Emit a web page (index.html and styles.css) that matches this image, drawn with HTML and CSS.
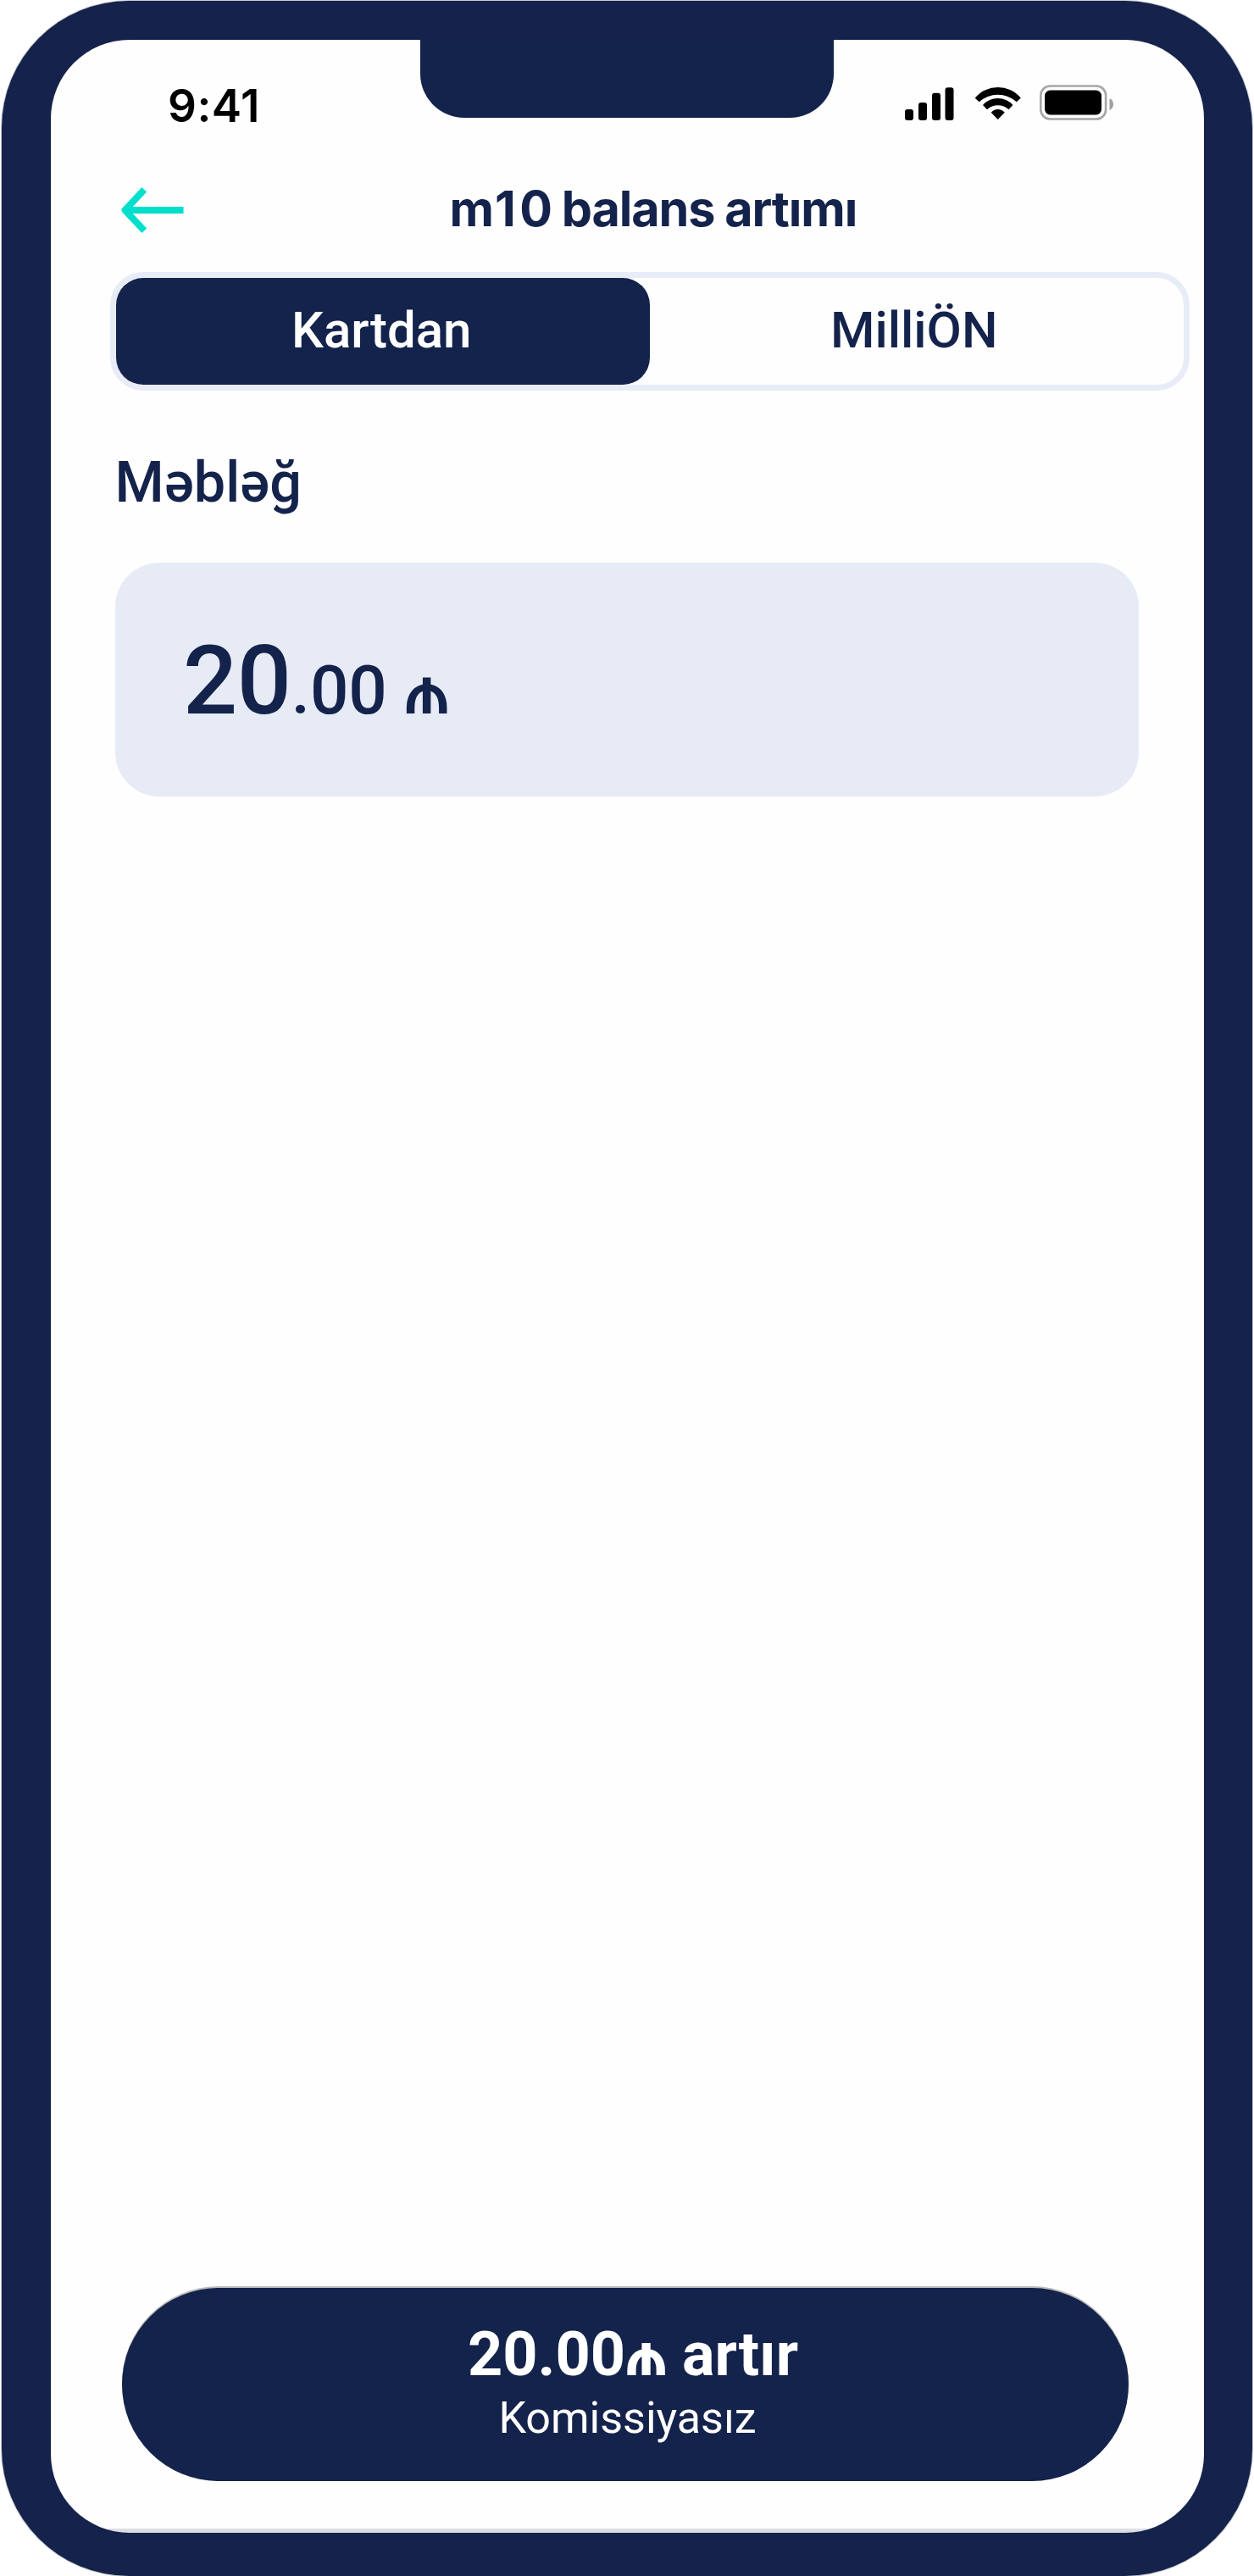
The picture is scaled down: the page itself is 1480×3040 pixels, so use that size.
FILE: index.html
```html
<!DOCTYPE html>
<html lang="az">
<head>
<meta charset="utf-8">
<title>m10 balans artımı</title>
<link rel="stylesheet" href="styles.css">
</head>
<body>
<div class="phone">
  <main class="screen">
    <div class="notch"></div>
    <div class="status-bar">
      <span class="time">9:41</span>
      <svg class="status-icons" viewBox="0 0 250 46" aria-hidden="true">
        <rect x="3" y="31" width="10" height="13" rx="3"/>
        <rect x="19" y="23" width="10" height="21" rx="3"/>
        <rect x="35" y="11.800" width="10" height="32.200" rx="3"/>
        <rect x="50.500" y="5.200" width="10" height="38.800" rx="3"/>
        <path d="M85.700 17.700A35 35 0 0 1 139.800 17.700L134.700 22.300A32.400 32.400 0 0 0 90.700 22.300ZM95 26A23.600 23.600 0 0 1 130.400 26L125.400 31.300A18.600 18.600 0 0 0 100 31.300ZM104.700 34.700A10.500 10.500 0 0 1 120.800 34.700L112.700 43Z"/>
        <rect x="163.300" y="3.500" width="76.800" height="39" rx="11" fill="none" stroke="#a6a6a6" stroke-width="2.600"/>
        <rect x="168" y="8.500" width="67" height="29" rx="6.500"/>
        <path d="M244.500 18Q249 20 249 25T244.500 32Z" fill="#a0a0a0"/>
      </svg>
    </div>
    <header class="header">
      <svg class="back" viewBox="0 0 74 56" aria-label="Geri">
        <path d="M27.300 3.700 4.500 28l22.800 24.300M5 28h68.500"/>
      </svg>
      <h1 class="title"><span class="em">m</span><span class="one">1</span>0 balans artımı</h1>
    </header>
    <div class="tabs">
      <button class="tab active">Kartdan</button>
      <button class="tab other">MilliÖN</button>
    </div>
    <h2 class="label">Məbləğ</h2>
    <div class="amount"><span class="whole">20</span><span class="rest">.00 ₼</span></div>
    <footer class="footer">
      <button class="submit">
        <span class="submit-title">20.00₼ artır</span>
        <span class="submit-note">Komissiyasız</span>
      </button>
    </footer>
  </main>
</div>
</body>
</html>
```
FILE: styles.css
```css
* { box-sizing: border-box; }
body { margin: 0; background: #fff; font-family: Roboto, sans-serif; color: #14234b; }
button { border: 0; padding: 0; background: none; font: inherit; color: inherit; }
h1, h2 { margin: 0; }

.phone {
  width: 1476px; height: 3039px; margin: 1px 0 0 2px;
  padding: 46px 57px 51px 58px;
  background: #15224b; border-radius: 150px;
  box-shadow: 0 0 0 1px #c9cdd0;
}
.screen {
  position: relative; height: 100%;
  display: flex; flex-direction: column;
  background: linear-gradient(#dcdee3, #dcdee3) bottom / 100% 5px no-repeat #fefefe;
  border-radius: 93px; overflow: hidden;
}
.notch {
  position: absolute; top: -1px; left: 436px; width: 488px; height: 92.500px;
  background: #14234b; border-radius: 0 0 52px 52px;
}
.status-bar {
  display: flex; justify-content: space-between; align-items: flex-start;
  padding: 47px 106.500px 0 138px; height: 169px; flex: none;
}
.time { font: 600 53px/60px Inter, sans-serif; color: #000; margin-top: 1px; letter-spacing: .5px; }
.status-icons { width: 250px; height: 46px; margin-top: 4px; }
.header { display: flex; align-items: center; height: 60px; padding-left: 82.500px; flex: none; }
.back { width: 74px; height: 56px; margin-top: 4px; fill: none; stroke: #00dfcb; stroke-width: 8; stroke-linejoin: round; }
.title {
  font: 700 57.500px/60px Inter, sans-serif; margin-left: 314px; white-space: nowrap;
  letter-spacing: -1.100px; word-spacing: -.7px;
}
.em { letter-spacing: 1px; }
.one { letter-spacing: 4.500px; }
.tabs {
  display: flex; flex: none; width: 1274px; height: 140px; margin: 45px 0 0 69.500px;
  border: 7px solid #e7ecf7; border-radius: 39px;
}
.tab { flex: 1; border-radius: 32px; font-size: 60px; font-weight: 500; padding: 0 3px 4px 0; }
.tab.active { flex: 0 0 630.500px; background: #14234b; color: #fff; }
.tab.other { padding-right: 6px; }
.label { font-size: 66.500px; line-height: 80px; font-weight: 500; margin: 68px 0 0 75.500px; }
.amount {
  display: flex; align-items: baseline; flex: none; width: 1208px; height: 276px;
  margin: 55px 0 0 76px; padding: 80px 0 0 80px;
  background: #e7ebf6; border-radius: 52px; font-weight: 500; line-height: 120px;
}
.whole { font-size: 113px; letter-spacing: -.4px; }
.rest { font-size: 80px; }
.footer { margin-top: auto; padding: 0 89px 61px 84px; }
.submit {
  display: flex; flex-direction: column; align-items: center;
  width: 100%; height: 228px; padding-top: 39px;
  background: #14234b; color: #fff; border-radius: 114px;
  box-shadow: 0 -2px #bdbdb9;
}
.submit-title { font-size: 72px; line-height: 80px; font-weight: 700; margin-left: 18px; }
.submit-note { font-size: 52px; line-height: 60px; margin: 5px 0 0 5px; }
```
